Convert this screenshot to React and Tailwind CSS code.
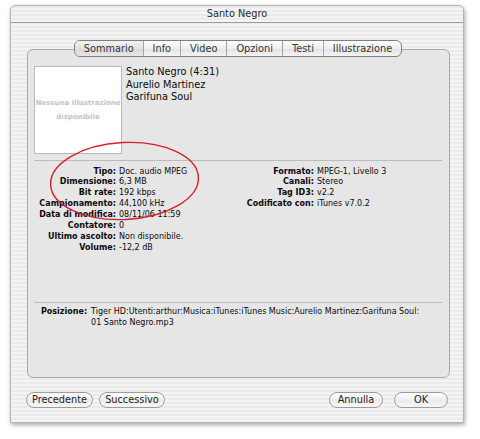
const stripes =
  'bg-[image:repeating-linear-gradient(180deg,#ebebeb_0px,#ebebeb_2px,#f4f4f4_2px,#f4f4f4_4px)]'

const tabs = ['Sommario', 'Info', 'Video', 'Opzioni', 'Testi', 'Illustrazione']

const leftRows = [
  ['Tipo:', 'Doc. audio MPEG'],
  ['Dimensione:', '6,3 MB'],
  ['Bit rate:', '192 kbps'],
  ['Campionamento:', '44,100 kHz'],
  ['Data di modifica:', '08/11/06 11:59'],
  ['Contatore:', '0'],
  ['Ultimo ascolto:', 'Non disponibile.'],
  ['Volume:', '-12,2 dB'],
]

const rightRows = [
  ['Formato:', 'MPEG-1, Livello 3'],
  ['Canali:', 'Stereo'],
  ['Tag ID3:', 'v2.2'],
  ['Codificato con:', 'iTunes v7.0.2'],
]

const InfoGrid = ({ rows, labelWidth }) => (
  <div
    className="grid content-start self-start gap-x-[3px] text-[8px] leading-[10.9px] text-[#0a0a0a]"
    style={{ gridTemplateColumns: `${labelWidth}px 1fr` }}
  >
    {rows.map(([k, v]) => (
      <div key={k} className="contents">
        <div className="text-right font-bold whitespace-nowrap">{k}</div>
        <div className="whitespace-nowrap">{v}</div>
      </div>
    ))}
  </div>
)

const Pill = ({ children, w }) => (
  <button
    className={`h-[16px] ${w} rounded-full border border-[#9c9c9c] bg-[linear-gradient(180deg,#ffffff,#ececec_55%,#f6f6f6)] text-[9.75px] leading-[14px] text-[#222] shadow-[inset_0_1px_0_#fff]`}
  >
    {children}
  </button>
)

export default function App() {
  return (
    <div className="relative w-[480px] h-[439px] bg-white pt-[5px] pl-[10px] font-['DejaVu_Sans',sans-serif]">
      <div
        className={`w-[454px] h-[418px] rounded-t-[5px] border border-[#b4b4b4] ${stripes} shadow-[1px_2px_4px_rgba(0,0,0,0.35)] flex flex-col`}
      >
        {/* title bar */}
        <div className="h-[17px] border-b border-[#9a9a9a] text-center text-[9.75px] leading-[16px] text-[#2a2a2a]">
          Santo Negro
        </div>

        {/* segmented tabs */}
        <div className="mt-[17px] relative z-10 flex justify-center pl-[2px]">
          <div className="flex h-[17px] rounded-[6px] border border-[#7e7e7e] bg-[linear-gradient(180deg,#ffffff,#eeeeee_50%,#e2e2e2_52%,#f4f4f4)] overflow-hidden">
            {tabs.map((t, i) => (
              <div
                key={t}
                className={`px-[9px] text-[9.75px] leading-[15px] text-[#333] ${
                  i > 0 ? 'border-l border-[#a6a6a6]' : ''
                } ${i === 0 ? 'bg-[linear-gradient(180deg,#f2f2f2,#e2e2e2_50%,#d8d8d8_52%,#e6e6e6)]' : ''}`}
              >
                {t}
              </div>
            ))}
          </div>
        </div>

        {/* content box */}
        <div className="-mt-[8px] ml-[16px] w-[423px] h-[329px] rounded-[6px] border border-[#a9a9a9] bg-[#e6e6e6] pt-[16px] pl-[6px] pr-[7px]">
          <div className="flex gap-[4px]">
            <div className="w-[88px] h-[88px] border border-[#b8b8b8] bg-white flex flex-col items-center justify-center gap-[5px] text-[7px] font-bold text-[#c2c2c2] leading-[9px]">
              <span className="whitespace-nowrap">Nessuna illustrazione</span>
              <span>disponibile</span>
            </div>
            <div className="text-[9.75px] leading-[12.5px] text-[#0a0a0a]">
              <div>Santo Negro (4:31)</div>
              <div>Aurelio Martinez</div>
              <div>Garifuna Soul</div>
            </div>
          </div>

          <div className="mt-[6px] h-[1px] bg-[#bcbcbc]" />

          <div className="mt-[5.5px] h-[87px] flex items-start">
            <div className="w-[206px]">
              <InfoGrid rows={leftRows} labelWidth={82} />
            </div>
            <InfoGrid rows={rightRows} labelWidth={74} />
          </div>

          <div className="mt-[48px] h-[1px] bg-[#bcbcbc]" />

          <div className="mt-[4.5px] pl-[7px] flex gap-[4px] text-[8px] leading-[10.9px] text-[#0a0a0a]">
            <div className="font-bold">Posizione:</div>
            <div>
              <div className="whitespace-nowrap">
                Tiger HD:Utenti:arthur:Musica:iTunes:iTunes Music:Aurelio Martinez:Garifuna Soul:
              </div>
              <div>01 Santo Negro.mp3</div>
            </div>
          </div>
        </div>

        {/* buttons */}
        <div className="mt-[14px] px-[15px] flex items-center">
          <div className="flex gap-[6px]">
            <Pill w="w-[67px]">Precedente</Pill>
            <Pill w="w-[66px]">Successivo</Pill>
          </div>
          <div className="ml-auto flex gap-[11px]">
            <Pill w="w-[54px]">Annulla</Pill>
            <Pill w="w-[54px]">OK</Pill>
          </div>
        </div>
      </div>

      {/* red marker circle */}
      <svg
        className="absolute left-0 top-0 pointer-events-none"
        width="480"
        height="439"
        viewBox="0 0 480 439"
      >
        <ellipse
          cx="124.5"
          cy="181"
          rx="74"
          ry="38.5"
          transform="rotate(-3 124.5 181)"
          fill="none"
          stroke="#d71f2b"
          strokeWidth="1.4"
        />
      </svg>
    </div>
  )
}
